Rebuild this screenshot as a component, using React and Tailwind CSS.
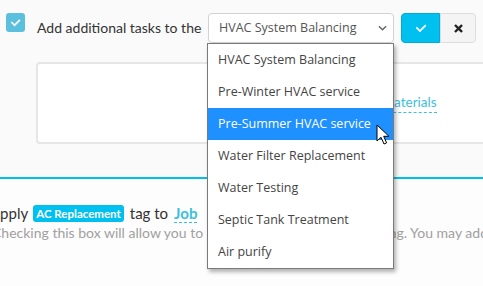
const items = [
  'HVAC System Balancing',
  'Pre-Winter HVAC service',
  'Pre-Summer HVAC service',
  'Water Filter Replacement',
  'Water Testing',
  'Septic Tank Treatment',
  'Air purify',
]

function Check({ className }) {
  return (
    <svg viewBox="0 0 16 16" className={className} fill="currentColor">
      <path d="M13.6 3.3 15.3 5 6.6 13.7 1 8.1 2.7 6.4 6.6 10.3z" />
    </svg>
  )
}

function Cursor() {
  return (
    <svg width="17" height="22" viewBox="0 0 17 22" className="absolute left-[376px] top-[124px]">
      <path d="M1 1 L1 17 L5 13.3 L8 20 L10.6 18.9 L7.7 12.3 L13 12.3 Z" fill="#fff" stroke="#000" strokeWidth="1" strokeLinejoin="round" />
    </svg>
  )
}

export default function App() {
  return (
    <div className="relative w-[483px] h-[286px] overflow-hidden bg-[#fafafa] font-['Lato',sans-serif] text-[#333]">
      <div className="flex items-start pt-[13px] pl-[6px] whitespace-nowrap">
        <div className="shrink-0 w-[19px] h-[19px] rounded-[3px] bg-[#5bc0de] flex items-center justify-center text-white">
          <Check className="w-[11px] h-[11px]" />
        </div>
        <span className="shrink-0 w-[165px] ml-[12px] mt-[5px] text-[14px] leading-[20px] text-[#333]">Add additional tasks to the</span>
        <div className="shrink-0 ml-[6px] w-[186px] h-[30px] border border-[#d2d2d2] rounded-[4px] bg-white flex items-center pl-[10px] pr-[6px] font-['Open_Sans',sans-serif] text-[12.5px] text-[#555]">
          <span className="flex-1">HVAC System Balancing</span>
          <svg viewBox="0 0 10 6" className="w-[9px] h-[6px] text-[#666]" fill="none" stroke="currentColor" strokeWidth="1.6">
            <path d="M1 1l4 4 4-4" />
          </svg>
        </div>
        <button className="shrink-0 ml-[7px] w-[39px] h-[30px] rounded-l-[4px] bg-[#00c0ef] border border-[#00acd6] flex items-center justify-center text-white">
          <Check className="w-[12px] h-[12px]" />
        </button>
        <button className="shrink-0 w-[36px] h-[30px] rounded-r-[4px] bg-[#f4f4f4] border border-[#ddd] flex items-center justify-center text-[#222]">
          <svg viewBox="0 0 10 10" className="w-[9px] h-[9px]" stroke="currentColor" strokeWidth="2.6" strokeLinecap="square">
            <path d="M2 2l6 6M8 2l-6 6" />
          </svg>
        </button>
      </div>

      <div className="ml-[36px] mt-[19px] w-[460px] h-[82px] border-2 border-[#e6e6e6] rounded-[4px] bg-white relative">
        <span className="absolute left-[345px] top-[29px] text-[13.5px] text-[#3cc0dc] border-b border-dashed border-[#3cc0dc] leading-[19px]">
          materials
        </span>
      </div>

      <div className="mt-[33px] h-[2px] bg-[#00c0e4]" />

      <div className="bg-[#fdfdfd] h-[120px]">
        <div className="flex items-center -ml-[10px] pt-[24px] text-[15px] leading-[20px] text-[#333] whitespace-nowrap">
          <span>Apply</span>
          <span className="ml-[5px] px-[3px] h-[17px] rounded-[3px] bg-[#00c0ef] text-white text-[11.5px] font-bold leading-[17px]">AC Replacement</span>
          <span className="ml-[6px]">tag to</span>
          <span className="ml-[6px] text-[#3cc0dc] font-bold border-b border-dashed border-[#3cc0dc] leading-[18px]">Job</span>
        </div>
        <div className="-ml-[8px] whitespace-nowrap text-[14px] leading-[20px] text-[#a0a0a0]">
          Checking this box will allow you to add the tag to a new job's listing. You may add more tags later.
        </div>
      </div>

      <div className="absolute left-[207px] top-[43px] w-[187px] bg-white border border-[#7a7a7a] shadow-[2px_3px_4px_rgba(0,0,0,0.3)] font-['Open_Sans',sans-serif] text-[12.5px]">
        {items.map((it, i) => (
          <div
            key={it}
            className={i === 2 ? 'h-[32px] flex items-center pl-[10px] pt-[1px] bg-[#1e90ff] text-white' : 'h-[32px] flex items-center pl-[10px] pt-[1px] text-[#444]'}
          >
            {it}
          </div>
        ))}
      </div>
      <Cursor />
    </div>
  )
}
